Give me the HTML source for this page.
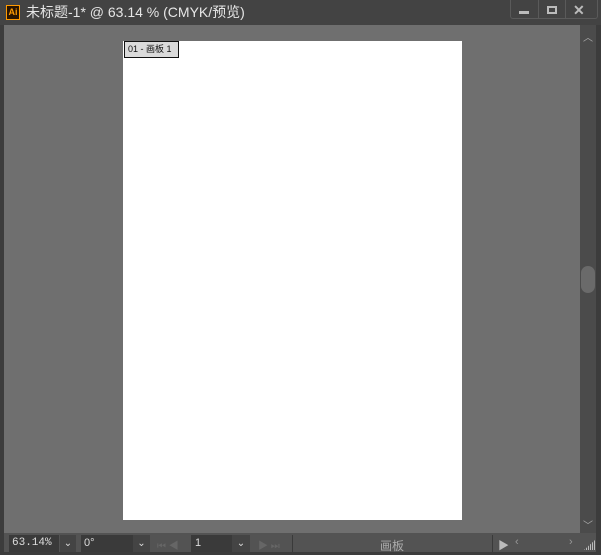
<!DOCTYPE html><html><head><style>
*{margin:0;padding:0;box-sizing:border-box}
body{width:601px;height:555px;background:#3c3c3c;position:relative;overflow:hidden;font-family:"Liberation Sans","Noto Sans CJK SC",sans-serif}
.a{position:absolute}
</style></head><body>
<div class="a" style="left:0;top:0;width:601px;height:25px;background:#434343"></div>
<div class="a" style="left:6px;top:5px;width:14px;height:15px;background:#2a1500;border:1px solid #ff9a00;color:#ff9a00;font-size:9px;font-weight:bold;line-height:13px;text-align:center">Ai</div>
<div class="a" style="left:26px;top:4px;color:#e6e6e6;font-size:14px;line-height:17px">未标题-1* @ 63.14 % (CMYK/预览)</div>
<div class="a" style="left:510px;top:0;width:88px;height:19px;border:1px solid #5a5a5a;border-top:none;border-radius:0 0 3px 3px"></div>
<div class="a" style="left:538px;top:0;width:1px;height:19px;background:#5a5a5a"></div>
<div class="a" style="left:565px;top:0;width:1px;height:19px;background:#5a5a5a"></div>
<div class="a" style="left:519px;top:11px;width:10px;height:3px;background:#bbb"></div>
<div class="a" style="left:547px;top:6px;width:10px;height:8px;border:2px solid #bbb"></div>
<div class="a" style="left:573px;top:2px;color:#bbb;font-size:14px;font-weight:bold">✕</div>
<div class="a" style="left:4px;top:25px;width:576px;height:508px;background:#6f6f6f"></div>
<div class="a" style="left:580px;top:25px;width:16px;height:508px;background:#4b4b4b"></div>
<div class="a" style="left:581px;top:266px;width:14px;height:27px;background:#6a6a6a;border-radius:7px"></div>
<div class="a" style="left:583px;top:29px;color:#aaa;font-size:10px">︿</div>
<div class="a" style="left:583px;top:517px;color:#aaa;font-size:10px">﹀</div>
<div class="a" style="left:123px;top:41px;width:339px;height:479px;background:#fff"></div>
<div class="a" style="left:124px;top:41px;width:55px;height:17px;background:#dadada;border:1px solid #111;font-size:9px;line-height:14px;padding-left:3px;color:#111">01 - 画板 1</div>
<div class="a" style="left:4px;top:533px;width:592px;height:19px;background:#535353"></div>
<div class="a" style="left:9px;top:535px;width:50px;height:17px;background:#3a3a3a;color:#ddd;font-size:11px;line-height:17px;padding-left:3px;font-family:'Liberation Mono',monospace">63.14%</div>
<div class="a" style="left:60px;top:535px;width:16px;height:17px;background:#444;color:#ddd;font-size:10px;text-align:center;line-height:17px">⌄</div>
<div class="a" style="left:81px;top:535px;width:52px;height:17px;background:#3a3a3a;color:#ddd;font-size:11px;line-height:17px;padding-left:3px">0°</div>
<div class="a" style="left:133px;top:535px;width:17px;height:17px;background:#444;color:#ddd;font-size:10px;text-align:center;line-height:17px">⌄</div>
<div class="a" style="left:157px;top:537px;color:#666;font-size:10px">⏮ ◀</div>
<div class="a" style="left:191px;top:535px;width:41px;height:17px;background:#3a3a3a;color:#ddd;font-size:11px;line-height:17px;padding-left:4px">1</div>
<div class="a" style="left:232px;top:535px;width:18px;height:17px;background:#444;color:#ddd;font-size:10px;text-align:center;line-height:17px">⌄</div>
<div class="a" style="left:258px;top:537px;color:#666;font-size:10px">▶ ⏭</div>
<div class="a" style="left:292px;top:535px;width:1px;height:17px;background:#3a3a3a"></div>
<div class="a" style="left:380px;top:537px;color:#aaa;font-size:12px">画板</div>
<div class="a" style="left:492px;top:535px;width:1px;height:17px;background:#3a3a3a"></div>
<div class="a" style="left:498px;top:537px;color:#bbb;font-size:11px">▶</div>
<div class="a" style="left:515px;top:536px;color:#999;font-size:11px">‹</div>
<div class="a" style="left:569px;top:536px;color:#999;font-size:11px">›</div>
<div class="a" style="left:584px;top:540px;width:11px;height:10px;background:repeating-linear-gradient(90deg,#bbb 0 1px,transparent 1px 2px);clip-path:polygon(100% 0,100% 100%,0 100%)"></div>
</body></html>
